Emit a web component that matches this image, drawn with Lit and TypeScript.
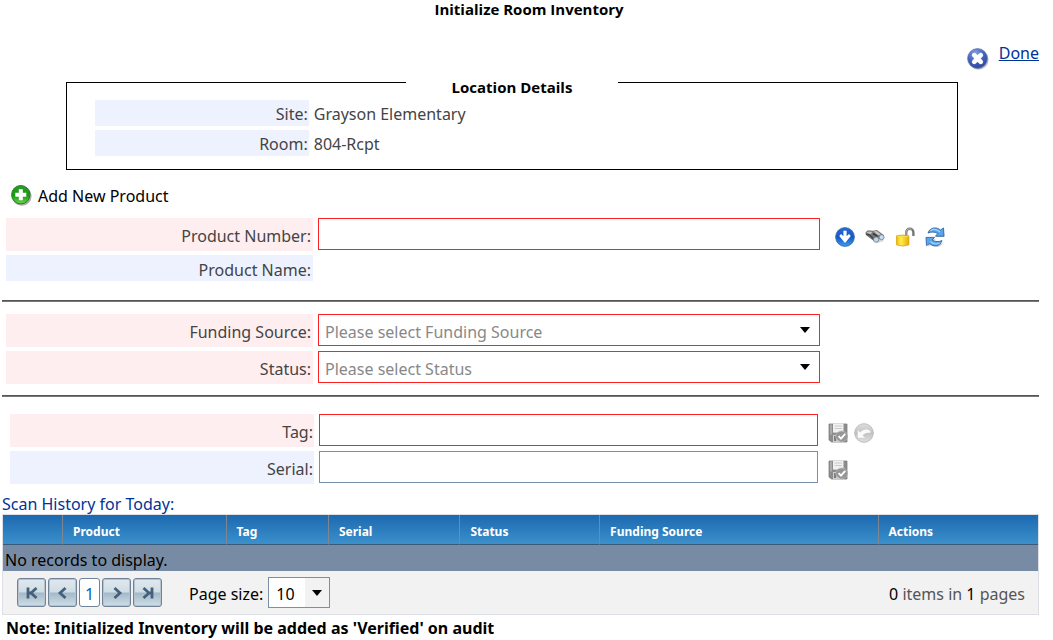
import { LitElement, html, css, svg } from "lit";
import { customElement } from "lit/decorators.js";

const closeIcon = svg`
  <svg class="icon" viewBox="0 0 22 22" width="22" height="22" aria-hidden="true">
    <defs>
      <radialGradient id="closeFill" cx="0.4" cy="0.25" r="0.8">
        <stop offset="0" stop-color="#8aa3e6"></stop>
        <stop offset="0.5" stop-color="#4564c4"></stop>
        <stop offset="1" stop-color="#2b419b"></stop>
      </radialGradient>
    </defs>
    <circle cx="11.6" cy="11.8" r="10" fill="#777" opacity="0.45"></circle>
    <circle cx="10.5" cy="10.5" r="9.9" fill="url(#closeFill)" stroke="#6a7cae" stroke-width="0.8"></circle>
    <path d="M7.200 7.200l6.600 6.600M13.800 7.200l-6.600 6.600" stroke="#fff" stroke-width="4.6" stroke-linecap="round"></path>
  </svg>`;

const addIcon = svg`
  <svg class="icon" viewBox="0 0 21 21" width="21" height="21" aria-hidden="true">
    <defs>
      <linearGradient id="addFill" x1="0" y1="0" x2="0" y2="1">
        <stop offset="0" stop-color="#2f9a2c"></stop>
        <stop offset="0.55" stop-color="#169a10"></stop>
        <stop offset="1" stop-color="#6ed84c"></stop>
      </linearGradient>
    </defs>
    <circle cx="10.8" cy="11" r="9.8" fill="#666" opacity="0.55"></circle>
    <circle cx="9.8" cy="9.7" r="9.2" fill="url(#addFill)" stroke="#237d25" stroke-width="1"></circle>
    <path d="M9.8 4.2v11M4.300 9.7h11" stroke="#fff" stroke-width="4"></path>
  </svg>`;

const downIcon = svg`
  <svg class="icon" viewBox="0 0 20 20" width="20" height="20" aria-hidden="true">
    <defs>
      <linearGradient id="downFill" x1="0" y1="0" x2="0" y2="1">
        <stop offset="0" stop-color="#2a6bd0"></stop>
        <stop offset="0.5" stop-color="#1259c8"></stop>
        <stop offset="1" stop-color="#3d9bf0"></stop>
      </linearGradient>
    </defs>
    <circle cx="10" cy="10" r="9.4" fill="url(#downFill)" stroke="#3a66a8" stroke-width="0.8"></circle>
    <path d="M8.400 3.800h3.200v5.400l2.300-2.100 1.900 2L10 16 4.200 9.100l1.900-2 2.300 2.100z" fill="#fff"></path>
  </svg>`;

const searchIcon = svg`
  <svg class="icon" viewBox="0 0 20 20" width="20" height="20" aria-hidden="true">
    <path d="M3 8.5l9 7.5 7-2-8-6z" fill="#999" opacity="0.4"></path>
    <path d="M.5 5.2L3 3.2l5 .6 4-.8 7 5.2-1.800 3.400-3.700-.6-.6 3.600-4.400-.8L.8 8z" fill="#777"></path>
    <path d="M1.500 5.800l2-1.400 4 .6-2 2.200zM8.500 4.600l3.200-.6 4.400 3.400-3 .8z" fill="#c4c4c4"></path>
    <path d="M1.400 7.200L4.500 8l4 4" fill="none" stroke="#444" stroke-width="1.400"></path>
    <path d="M8 6.500l4.600 3" fill="none" stroke="#3d3d3d" stroke-width="1.600"></path>
    <circle cx="11.2" cy="12.600" r="2.700" fill="#b9d5f4" stroke="#777" stroke-width="0.800"></circle>
    <circle cx="16.600" cy="10.200" r="2.500" fill="#c5ddf6" stroke="#777" stroke-width="0.800"></circle>
  </svg>`;

const unlockIcon = svg`
  <svg class="icon" viewBox="0 0 20 20" width="20" height="20" aria-hidden="true">
    <defs>
      <linearGradient id="lockFill" x1="0" y1="0" x2="1" y2="0">
        <stop offset="0" stop-color="#f5b90c"></stop>
        <stop offset="0.35" stop-color="#fff04a"></stop>
        <stop offset="1" stop-color="#e9a80a"></stop>
      </linearGradient>
    </defs>
    <path d="M11.200 9.500V5.400a3.600 3.600 0 0 1 7.200 0V9" fill="none" stroke="#777" stroke-width="2.400"></path>
    <path d="M11 9V5.200a3.600 3.600 0 0 1 5.600-2.800" fill="none" stroke="#c4c4c4" stroke-width="0.800"></path>
    <path d="M1.500 8.800q6.300-1.600 12.400 0v9q-6.200 2.600-12.400 0z" fill="url(#lockFill)" stroke="#d39b08" stroke-width="0.700"></path>
    <path d="M1.900 9.200q6 1.800 11.600 0" fill="none" stroke="#f8dc4c" stroke-width="1"></path>
  </svg>`;

const refreshIcon = svg`
  <svg class="icon" viewBox="0 0 21 20" width="21" height="20" aria-hidden="true">
    <g fill="#888" opacity="0.45" transform="translate(1 1)">
      <path d="M3 5C6 .4 11.500 0 15 3.200L17.500 1.200 18.500 9H10.500l2-2.600C9.800 4 6 4 3 5z"></path>
      <path d="M17 15C14 19.600 8.500 20 5 16.800L2.500 18.600 1.300 11H9.500l-2 2.600C10 16 14 16 17 15z"></path>
    </g>
    <g fill="#5aa5ea" stroke="#2c65ae" stroke-width="0.9" stroke-linejoin="round">
      <path d="M3 6C5 .2 11.500-.4 15.500 3L18.500 1 19 9.200H10.500l2.300-2.600C10 4.600 6 4.600 3 6z"></path>
      <path d="M17 13.600C15 19.800 8.500 20 4.600 16.600L1.500 18.600 1 10.400H9.500l-2.300 2.600C10 15 14 15 17 13.600z"></path>
    </g>
    <path d="M5.500 3.800C8.500 1.800 12 2.200 14.800 4.800M14.600 16c-3 1.600-6.200 1.200-9-1.200" fill="none" stroke="#a8d4fa" stroke-width="1.200"></path>
  </svg>`;

const saveIcon = svg`
  <svg class="icon" viewBox="0 0 20 20" width="20" height="20" aria-hidden="true">
    <path d="M1 1h18v18H3.500L1 17z" fill="#8c8c8c" stroke="#808080" stroke-width="0.8"></path>
    <path d="M2 1.500h2v10H2z" fill="#ababab"></path>
    <path d="M5 .6h10.500v9H5z" fill="#f1f1f1"></path>
    <path d="M6.500 3h7.500M6.500 5.500h7.500" stroke="#c6c6c6" stroke-width="0.9"></path>
    <path d="M5 12h7v7H5z" fill="#d0d0d0"></path>
    <path d="M6 13h2.200v5H6z" fill="#7c7c7c"></path>
    <ellipse cx="13.700" cy="13.300" rx="6" ry="5.300" fill="#969696" stroke="#bbb" stroke-width="0.7"></ellipse>
    <path d="M10.600 13.200l2.400 2.500 4.200-4.900" fill="none" stroke="#fff" stroke-width="1.900"></path>
  </svg>`;

const undoIcon = svg`
  <svg class="icon" viewBox="0 0 20 20" width="20" height="20" aria-hidden="true">
    <defs>
      <linearGradient id="undoFill" x1="0" y1="0" x2="0" y2="1">
        <stop offset="0" stop-color="#dedede"></stop>
        <stop offset="0.5" stop-color="#c2c2c2"></stop>
        <stop offset="1" stop-color="#e0e0e0"></stop>
      </linearGradient>
    </defs>
    <circle cx="10" cy="10" r="9.300" fill="url(#undoFill)" stroke="#bcbcbc" stroke-width="1"></circle>
    <path d="M3.800 7v7.800H11L8.600 12.600c1.600-2.400 4-3.200 7.800-2.900v-1.500C13.800 5.800 9.300 6 6.200 9.400z" fill="#fafafa"></path>
  </svg>`;

const arrow = svg`
  <svg class="arrow" viewBox="0 0 10 6" width="10" height="6" aria-hidden="true">
    <path d="M0 0h10L5 6z" fill="#000"></path>
  </svg>`;

const glyph = (d: string) => svg`
  <svg viewBox="0 0 14 14" width="14" height="14" aria-hidden="true">
    <path d=${d} fill="none" stroke="#46607b" stroke-width="2.800"></path>
  </svg>`;

const columns = ["", "Product", "Tag", "Serial", "Status", "Funding Source", "Actions"];

@customElement("app-root")
export class AppRoot extends LitElement {
  static styles = css`
    :host {
      display: block;
      padding: 0 14px 0 2px;
      background: #fff;
      color: #000;
      font: 16px/20px "Noto Sans", "Open Sans", sans-serif;
    }
    * { box-sizing: border-box; }
    input, select, button { font: inherit; color: inherit; margin: 0; }
    svg { display: block; }
    .title, .location legend {
      font-family: "Open Sans", "Noto Sans", sans-serif;
      font-size: 15px;
      font-weight: bold;
    }
    .title {
      margin: 0;
      padding-left: 17px;
      text-align: center;
      line-height: 18px;
    }
    .top {
      display: flex;
      justify-content: flex-end;
      align-items: flex-start;
      gap: 10px;
      padding-top: 25px;
    }
    .done-icon { padding-top: 5px; }
    a { color: #003399; }
    .iconbtn {
      display: block;
      padding: 0;
      border: 0;
      background: none;
      cursor: pointer;
    }
    .location {
      margin: -3px 81px 0 64px;
      padding: 0 28px 13px;
      border: 1px solid #000;
      min-width: 0;
    }
    .location legend {
      margin: 0 auto;
      padding: 10px 46px 0;
      line-height: 20px;
    }
    .details {
      display: grid;
      grid-template-columns: 214fr 616fr;
      gap: 4px 5px;
      margin: 3px 0 0;
      color: #444;
    }
    .details dt, .label {
      background: #eef2ff;
      text-align: right;
      color: #444;
    }
    .details dt, .details dd {
      margin: 0;
      padding: 4px 1px 2px 0;
    }
    .add {
      display: flex;
      align-items: center;
      gap: 6px;
      margin: 15px 0 12px 9px;
      padding: 0;
      border: 0;
      background: none;
    }
    .fields {
      display: grid;
      grid-template-columns: 307fr 502fr 214fr;
      gap: 4px 5px;
      padding-left: 4px;
    }
    .scan {
      grid-template-columns: 304fr 499fr 216fr;
      padding-left: 8px;
    }
    .label { padding: 8px 2px 5px 0; }
    .scan .label { padding-right: 1px; }
    .label.short { padding: 5px 2px 1px 0; }
    .required { background: #ffeef0; }
    .box {
      width: 100%;
      height: 32px;
      padding: 2px 6px;
      border: 1px solid #7a90aa;
      border-radius: 0;
      background: #fff;
      outline: 0;
    }
    .box.must { border-color: #f22; }
    .combo { display: grid; align-items: center; align-self: start; }
    .combo select, .combo .arrow { grid-area: 1 / 1; }
    .combo select {
      appearance: none;
      padding: 4px 30px 0 6px;
      color: #888;
    }
    .arrow { justify-self: end; margin-right: 10px; pointer-events: none; }
    .tools {
      display: flex;
      align-items: center;
      gap: 10px;
      padding: 5px 0 0 10px;
    }
    .scan .tools { gap: 6px; padding: 5px 0 0 5px; }
    hr {
      height: 2px;
      margin: 19px 0 12px;
      border: 0;
      border-top: 1px solid #555;
      background: #777;
    }
    hr.second { margin: 11px 0 17px; }
    .history { margin: 10px 0 0; color: #003399; }
    .grid { border: 1px solid #dcdfe6; background: #f2f2f2; }
    table { width: 100%; border-collapse: separate; border-spacing: 0; table-layout: fixed; }
    th {
      height: 30px;
      padding: 4px 0 0 10px;
      text-align: left;
      color: #fff;
      font-size: 12px;
      line-height: 20px;
      border-left: 1px solid #7c8792;
      border-bottom: 1px solid #3a5a7c;
      background: linear-gradient(#1c69b0, #3b90cb);
    }
    th:first-child { border-left: 0; }
    .c0 { width: 5.7%; }
    .c1 { width: 15.8%; }
    .c2 { width: 9.9%; }
    .c3 { width: 12.7%; }
    .c4 { width: 13.5%; }
    .c5 { width: 26.9%; }
    td {
      height: 26px;
      padding: 5px 0 1px 2px;
      background: #778ca4;
    }
    .pager {
      display: flex;
      align-items: center;
      gap: 2px;
      min-height: 43px;
      padding: 0 13px 0 14px;
    }
    .page {
      display: grid;
      place-items: center;
      width: 29px;
      height: 29px;
      padding: 0;
      border: 1px solid #6f8297;
      border-radius: 3px;
      background: linear-gradient(#dfe8ee 0%, #d0dde5 48%, #a3b9c8 52%, #cfdee6 100%);
      box-shadow: inset 0 0 0 1px #b4c3cf;
    }
    .page.current {
      width: 21px;
      padding-top: 2px;
      background: #fff;
      color: #0a5cb5;
      box-shadow: none;
    }
    .size-label { margin-left: 25px; padding-top: 2px; }
    .combo.size { width: 62px; margin-left: 3px; align-self: center; }
    .combo.size select {
      height: 31px;
      padding: 3px 24px 0 7px;
      color: #000;
      background: linear-gradient(90deg, #fff 36px, #f2f2f2 36px);
    }
    .size .arrow { margin-right: 8px; }
    .total { margin-left: auto; padding-top: 2px; color: #555; }
    .total span { color: #000; }
    .note { margin: 3px 0 0 4px; font-weight: bold; }
  `;

  private combo(id: string, text: string) {
    return html`<div class="combo">
      <select class="box must" id=${id}><option>${text}</option></select>
      ${arrow}
    </div>`;
  }

  private tool(label: string, icon: unknown) {
    return html`<button class="iconbtn" type="button" aria-label=${label}>${icon}</button>`;
  }

  private pageButton(label: string, d: string) {
    return html`<button class="page" type="button" aria-label=${label}>${glyph(d)}</button>`;
  }

  render() {
    return html`
      <h1 class="title">Initialize Room Inventory</h1>
      <div class="top">
        <span class="done-icon">${closeIcon}</span>
        <a href="#">Done</a>
      </div>
      <fieldset class="location">
        <legend>Location Details</legend>
        <dl class="details">
          <dt>Site:</dt><dd>Grayson Elementary</dd>
          <dt>Room:</dt><dd>804-Rcpt</dd>
        </dl>
      </fieldset>

      <button class="add" type="button">${addIcon}<span>Add New Product</span></button>

      <div class="fields">
        <label class="label required" for="number">Product Number:</label>
        <input class="box must" id="number" type="text" />
        <div class="tools">
          ${this.tool("Load product", downIcon)}
          ${this.tool("Search", searchIcon)}
          ${this.tool("Unlock", unlockIcon)}
          ${this.tool("Refresh", refreshIcon)}
        </div>
        <span class="label short">Product Name:</span>
      </div>
      <hr />
      <div class="fields">
        <label class="label required" for="funding">Funding Source:</label>
        ${this.combo("funding", "Please select Funding Source")}
        <span></span>
        <label class="label required" for="status">Status:</label>
        ${this.combo("status", "Please select Status")}
      </div>
      <hr class="second" />
      <div class="fields scan">
        <label class="label required" for="tag">Tag:</label>
        <input class="box must" id="tag" type="text" />
        <div class="tools">
          ${this.tool("Save tag", saveIcon)}
          ${this.tool("Undo", undoIcon)}
        </div>
        <label class="label" for="serial">Serial:</label>
        <input class="box" id="serial" type="text" />
        <div class="tools">${this.tool("Save serial", saveIcon)}</div>
      </div>

      <p class="history">Scan History for Today:</p>
      <div class="grid">
        <table>
          <thead>
            <tr>${columns.map((name, i) => html`<th class="c${i}" scope="col">${name}</th>`)}</tr>
          </thead>
          <tbody>
            <tr><td colspan="7">No records to display.</td></tr>
          </tbody>
        </table>
        <div class="pager">
          ${this.pageButton("First page", "M3 1.500v11M11.500 2L6 7l5.500 5M4 7h3")}
          ${this.pageButton("Previous page", "M9.500 2L4 7l5.500 5")}
          <button class="page current" type="button">1</button>
          ${this.pageButton("Next page", "M4.500 2L10 7l-5.500 5")}
          ${this.pageButton("Last page", "M11 1.500v11M2.500 2L8 7l-5.500 5M7 7h3")}
          <label class="size-label" for="size">Page size:</label>
          <div class="combo size">
            <select class="box" id="size"><option>10</option></select>
            ${arrow}
          </div>
          <div class="total"><span>0</span> items in <span>1</span> pages</div>
        </div>
      </div>
      <p class="note">Note: Initialized Inventory will be added as 'Verified' on audit</p>
    `;
  }
}
